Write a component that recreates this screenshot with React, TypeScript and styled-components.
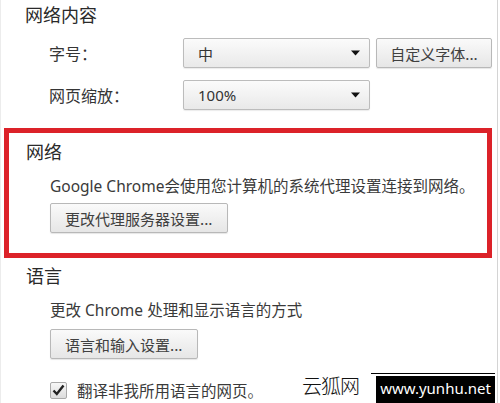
import React from "react";
import styled, { createGlobalStyle } from "styled-components";

const Global = createGlobalStyle`
  html, body { margin: 0; padding: 0; background: #fff; }
  body { font-family: "Noto Sans", "Noto Sans CJK SC", sans-serif; color: #353535; }
`;

const Page = styled.div`
  position: relative;
  width: 498px;
  height: 403px;
  box-sizing: border-box;
  border-left: 1px solid #ececec;
  border-right: 1px solid #d4d4d4;
  overflow: hidden;
  background: #fff;
`;

const Section = styled.section`
  padding: 2px 0 0 24px;
`;

const Heading = styled.h2`
  margin: 0;
  font-family: "Noto Sans CJK SC", sans-serif;
  font-size: 18px;
  line-height: 24px;
  font-weight: 400;
  color: #2a2a2a;
`;

const FormGrid = styled.div`
  display: grid;
  grid-template-columns: 128px 187px 116px;
  column-gap: 6px;
  row-gap: 12px;
  margin: 12px 0 0 24px;
  align-items: center;
`;

const Label = styled.span`
  font-family: "Noto Sans CJK SC", sans-serif;
  font-size: 16px;
  line-height: 30px;
  color: #353535;
`;

const Select = styled.div`
  height: 30px;
  box-sizing: border-box;
  display: flex;
  align-items: center;
  justify-content: space-between;
  padding: 0 9px 0 14px;
  border: 1px solid #bcbcbc;
  border-radius: 2px;
  background: linear-gradient(#fbfbfb, #e9e9e9);
  box-shadow: 0 1px 1px rgba(0, 0, 0, 0.08);
  font-family: "Noto Sans", "Noto Sans CJK SC", sans-serif;
  font-size: 15px;
  color: #333;
`;

const Button = styled.button`
  height: 30px;
  box-sizing: border-box;
  padding: 0 14px;
  white-space: nowrap;
  border: 1px solid #b8b8b8;
  border-radius: 2px;
  background: linear-gradient(#fafafa, #e6e6e6);
  box-shadow: 0 1px 1px rgba(0, 0, 0, 0.1);
  font-family: "Noto Sans CJK SC", sans-serif;
  font-size: 15px;
  color: #404040;
  text-align: center;
  cursor: default;
`;

const GridButton = styled(Button)`
  padding: 0 6px;
  width: 116px;
`;

const RedBox = styled.section`
  margin: 18px 0 0 3px;
  width: 488px;
  height: 130px;
  box-sizing: border-box;
  border: 5px solid #dc2229;
  padding: 6px 0 0 17px;
`;

const Indent = styled.div<{ $top: number }>`
  margin: ${(p) => p.$top}px 0 0 24px;
`;

const Text = styled.p`
  margin: 0;
  font-family: "Noto Sans", "Noto Sans CJK SC", sans-serif;
  font-size: 15.5px;
  line-height: 22px;
  color: #3a3a3a;
  white-space: nowrap;
`;

const LangSection = styled.section`
  padding: 5px 0 0 25px;
`;

const CheckRow = styled.label`
  display: flex;
  align-items: center;
  gap: 10px;
  margin: 20px 0 0 49px;
  font-family: "Noto Sans CJK SC", sans-serif;
  font-size: 15.5px;
  color: #3a3a3a;
  white-space: nowrap;
`;

const CheckBox = styled.span`
  width: 17px;
  height: 17px;
  box-sizing: border-box;
  border: 1px solid #a9a9a9;
  border-radius: 2px;
  background: linear-gradient(#f7f7f7, #dcdcdc);
  display: flex;
  align-items: center;
  justify-content: center;
`;

const Watermark = styled.div`
  position: absolute;
  right: 0;
  bottom: 0;
  height: 30px;
  display: flex;
  align-items: flex-end;
  padding-left: 55px;
  background: linear-gradient(to right, rgba(255, 255, 255, 0), #fff 45px);
`;

const SiteName = styled.span`
  font-family: "Noto Sans CJK SC", serif;
  font-size: 20px;
  line-height: 26px;
  font-weight: 300;
  color: #111;
  margin: 0 12px 4px 0;
  letter-spacing: -1px;
`;

const UrlBlock = styled.div`
  display: flex;
  flex-direction: column;
  align-items: flex-end;
  margin-right: 2px;
`;

const UrlLine = styled.div`
  width: 124px;
  height: 1px;
  background: #000;
  margin-bottom: 2px;
`;

const UrlBox = styled.div`
  width: 119px;
  height: 27px;
  background: #000;
  color: #fff;
  font-family: "Noto Sans", sans-serif;
  font-size: 15px;
  line-height: 24px;
  text-align: center;
`;

const Arrow = () => (
  <svg width="9" height="6" viewBox="0 0 9 6">
    <path d="M0 0.5 H9 L4.5 5.5 Z" fill="#111" />
  </svg>
);

export default function App() {
  return (
    <>
      <Global />
      <Page>
        <Section>
          <Heading>网络内容</Heading>
          <FormGrid>
            <Label>字号：</Label>
            <Select>
              <span>中</span>
              <Arrow />
            </Select>
            <GridButton>自定义字体...</GridButton>
            <Label>网页缩放：</Label>
            <Select>
              <span>100%</span>
              <Arrow />
            </Select>
          </FormGrid>
        </Section>
        <RedBox>
          <Heading>网络</Heading>
          <Indent $top={12}>
            <Text>Google Chrome会使用您计算机的系统代理设置连接到网络。</Text>
          </Indent>
          <Indent $top={6}>
            <Button>更改代理服务器设置...</Button>
          </Indent>
        </RedBox>
        <LangSection>
          <Heading>语言</Heading>
          <Indent $top={12}>
            <Text>更改 Chrome 处理和显示语言的方式</Text>
          </Indent>
          <Indent $top={8}>
            <Button>语言和输入设置...</Button>
          </Indent>
        </LangSection>
        <CheckRow>
          <CheckBox>
            <svg width="13" height="12" viewBox="0 0 13 12">
              <path d="M1.5 6.5 L4.8 10 L11.5 1.5" fill="none" stroke="#222" strokeWidth="2.4" />
            </svg>
          </CheckBox>
          翻译非我所用语言的网页。
        </CheckRow>
        <Watermark>
          <SiteName>云狐网</SiteName>
          <UrlBlock>
            <UrlLine />
            <UrlBox>www.yunhu.net</UrlBox>
          </UrlBlock>
        </Watermark>
      </Page>
    </>
  );
}
